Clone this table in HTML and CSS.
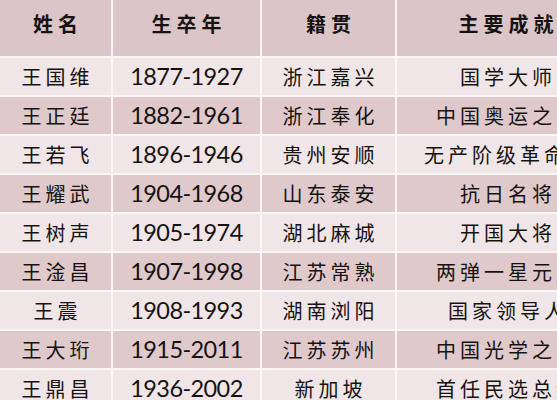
FILE: index.html
```html
<!DOCTYPE html>
<html lang="zh">
<head>
<meta charset="utf-8">
<link rel="stylesheet" href="styles.css">
</head>
<body>
<div class="sheet">
  <div class="row head"><div class="cell zh">姓名</div><div class="cell zh">生卒年</div><div class="cell zh">籍贯</div><div class="cell zh">主要成就</div></div>
  <div class="row light"><div class="cell zh">王国维</div><div class="cell num">1877-1927</div><div class="cell zh">浙江嘉兴</div><div class="cell zh">国学大师</div></div>
  <div class="row dark"><div class="cell zh">王正廷</div><div class="cell num">1882-1961</div><div class="cell zh">浙江奉化</div><div class="cell zh">中国奥运之父</div></div>
  <div class="row light"><div class="cell zh">王若飞</div><div class="cell num">1896-1946</div><div class="cell zh">贵州安顺</div><div class="cell zh">无产阶级革命家</div></div>
  <div class="row dark"><div class="cell zh">王耀武</div><div class="cell num">1904-1968</div><div class="cell zh">山东泰安</div><div class="cell zh">抗日名将</div></div>
  <div class="row light"><div class="cell zh">王树声</div><div class="cell num">1905-1974</div><div class="cell zh">湖北麻城</div><div class="cell zh">开国大将</div></div>
  <div class="row dark"><div class="cell zh">王淦昌</div><div class="cell num">1907-1998</div><div class="cell zh">江苏常熟</div><div class="cell zh">两弹一星元勋</div></div>
  <div class="row light"><div class="cell zh">王震</div><div class="cell num">1908-1993</div><div class="cell zh">湖南浏阳</div><div class="cell zh">国家领导人</div></div>
  <div class="row dark"><div class="cell zh">王大珩</div><div class="cell num">1915-2011</div><div class="cell zh">江苏苏州</div><div class="cell zh">中国光学之父</div></div>
  <div class="row light"><div class="cell zh">王鼎昌</div><div class="cell num">1936-2002</div><div class="cell zh">新加坡</div><div class="cell zh">首任民选总统</div></div>
</div>
</body>
</html>
```

FILE: styles.css
```css
html, body {
  margin: 0;
  padding: 0;
  background: #ffffff;
  overflow: hidden;
}

.sheet {
  display: grid;
  grid-template-columns: 111px 147px 133px 218px;
  grid-template-rows: 56px;
  grid-auto-rows: 37px;
  gap: 2px;
  width: 615px;
  background: #fbf7f7;
}

.row {
  display: contents;
}

.cell {
  display: flex;
  align-items: center;
  justify-content: center;
  white-space: nowrap;
  overflow: hidden;
  color: #161212;
}

.head .cell { background: #dcc5c8; padding-bottom: 10px; }
.light .cell { background: #f0e6e7; }
.dark .cell { background: #dfc9cb; }

.zh {
  font-family: "Noto Sans CJK SC", "Noto Sans", sans-serif;
  font-size: 20px;
  letter-spacing: 4px;
  text-indent: 4px;
}

.head .zh {
  font-weight: 700;
  font-size: 20px;
  letter-spacing: 5px;
  text-indent: 5px;
}

.num {
  font-family: Lato, "Liberation Sans", sans-serif;
  font-size: 23.5px;
  letter-spacing: -0.6px;
  padding-bottom: 1px;
}
```
